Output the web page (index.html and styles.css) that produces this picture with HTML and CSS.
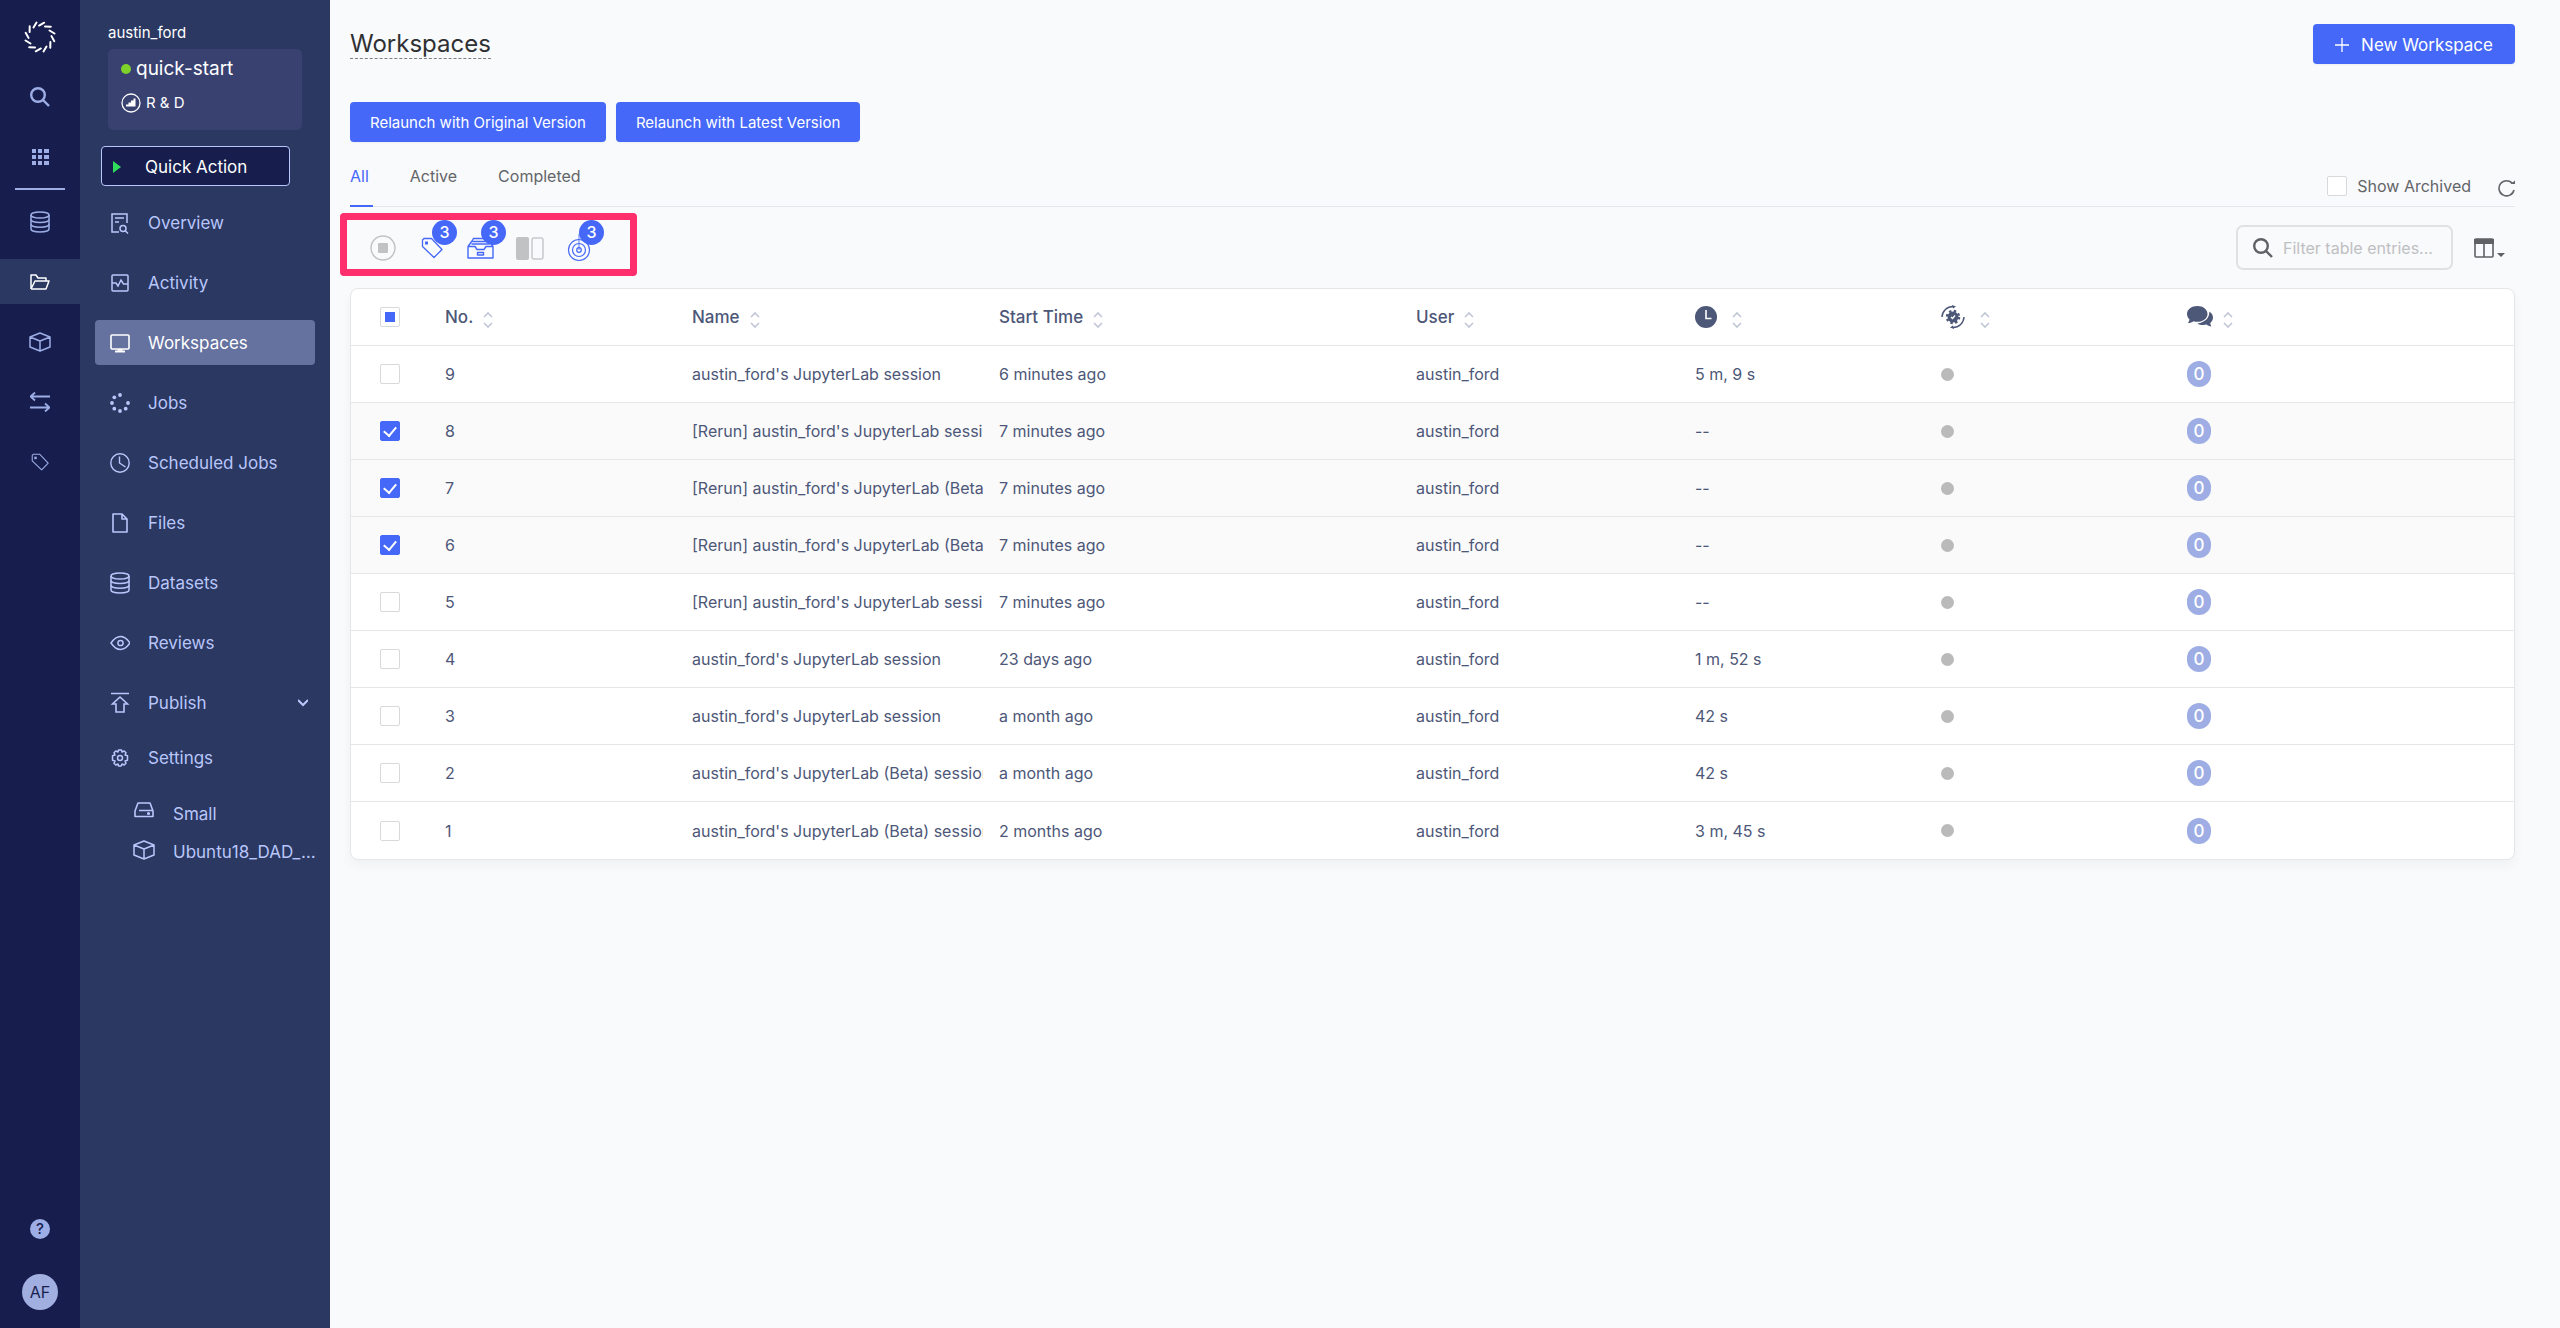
FILE: index.html
```html
<!DOCTYPE html>
<html lang="en">
<head>
<meta charset="utf-8">
<meta name="viewport" content="width=device-width, initial-scale=1">
<title>Workspaces - quick-start</title>
<link rel="stylesheet" href="styles.css">
</head>
<body>
<svg class="sprite" aria-hidden="true">
  <symbol id="i-database" viewBox="0 0 20 22"><g fill="none" stroke="currentColor" stroke-width="1.5"><ellipse cx="10" cy="4" rx="9" ry="3"/><path d="M1 4v14c0 1.700 4 3 9 3s9-1.300 9-3V4"/><path d="M1 8.500c0 1.700 4 3 9 3s9-1.300 9-3M1 13.200c0 1.700 4 3 9 3s9-1.300 9-3"/></g></symbol>
  <symbol id="i-cube" viewBox="0 0 22 20"><path d="M11 1 21 5v10l-10 4L1 15V5zM1 5l10 4 10-4M11 9v10" fill="none" stroke="currentColor" stroke-width="1.500" stroke-linejoin="round"/></symbol>
  <symbol id="i-search" viewBox="0 0 20 20"><g fill="none" stroke="currentColor" stroke-width="2.400"><circle cx="8" cy="8" r="6.800"/><path d="m13 13 6 6"/></g></symbol>
  <symbol id="i-sort" viewBox="0 0 10 16"><path d="m1 5 4-4 4 4M1 11l4 4 4-4" fill="none" stroke="#c0c5d6" stroke-width="1.600"/></symbol>
  <symbol id="i-tag" viewBox="0 0 22 22"><path d="M1.500 3v6.500L13 20.500l8-8L10.500 1.500H3z" fill="none" stroke="currentColor" stroke-width="1.300" stroke-linejoin="round"/><path d="M4 4.500h3v3H4z" fill="currentColor"/></symbol>
</svg>
<div class="app">
  <nav class="rail" aria-label="Main">
    <a class="rail-item logo" href="#" aria-label="Home"><svg width="34" height="34" viewBox="-17 -17 34 34"><g stroke="#fff" stroke-width="2" stroke-linecap="round"><path id="ray" d="M-3.500-14.500-6.500-9.500"/><use href="#ray" transform="rotate(30)"/><use href="#ray" transform="rotate(60)"/><use href="#ray" transform="rotate(90)"/><use href="#ray" transform="rotate(120)"/><use href="#ray" transform="rotate(150)"/><use href="#ray" transform="rotate(180)"/><use href="#ray" transform="rotate(210)"/><use href="#ray" transform="rotate(240)"/><use href="#ray" transform="rotate(270)"/><use href="#ray" transform="rotate(300)"/><use href="#ray" transform="rotate(330)"/></g></svg></a>
    <a class="rail-item" href="#" aria-label="Search"><svg width="20" height="20"><use href="#i-search"/></svg></a>
    <a class="rail-item" href="#" aria-label="Apps"><svg width="17" height="16" viewBox="0 0 17 16" fill="currentColor"><path d="M0 0h4v4H0zM6 0h4v4H6zM12 0h5v4h-5zM0 6h4v4H0zM6 6h4v4H6zM12 6h5v4h-5zM0 12h4v4H0zM6 12h4v4H6zM12 12h5v4h-5z"/></svg></a>
    <hr class="rail-line">
    <a class="rail-item" href="#" aria-label="Data"><svg width="20" height="22"><use href="#i-database"/></svg></a>
    <a class="rail-item current" href="#" aria-label="Projects"><svg width="20" height="16" viewBox="0 0 20 16" fill="none" stroke="currentColor" stroke-width="1.500" stroke-linejoin="round"><path d="M1 15V1h5l2 3h8v3M1 15h15l3-8H5L1 15"/></svg></a>
    <a class="rail-item" href="#" aria-label="Environments"><svg width="22" height="20"><use href="#i-cube"/></svg></a>
    <a class="rail-item" href="#" aria-label="Transfers"><svg width="20" height="20" viewBox="0 0 20 20" fill="none" stroke="currentColor" stroke-width="1.800"><path d="M5 .5.500 4.500 5 8.500M1 4.500h19M15 11.500l4.500 4-4.500 4M19 15.500H0"/></svg></a>
    <a class="rail-item" href="#" aria-label="Tags"><svg width="18" height="18"><use href="#i-tag"/></svg></a>
    <div class="rail-foot">
      <button class="help" type="button" aria-label="Help">?</button>
      <button class="avatar" type="button">AF</button>
    </div>
  </nav>

  <aside class="side">
    <header class="project">
      <a class="owner" href="#">austin_ford</a>
      <div class="card">
        <a class="project-name" href="#"><span class="live"></span>quick-start</a>
        <span class="stage"><svg width="20" height="20" viewBox="0 0 20 20"><circle cx="10" cy="10" r="9" fill="none" stroke="#fff" stroke-width="1.300"/><path d="M5 13.500v-2h2.500V9.500H10V7.500h2.500V5.500h2v8z" fill="#fff"/></svg>R &amp; D</span>
      </div>
    </header>
    <button class="quick" type="button"><svg width="8" height="12" viewBox="0 0 8 12"><path d="m0 0 8 6-8 6z" fill="#2fdc5b"/></svg>Quick Action</button>
    <nav class="menu" aria-label="Project">
      <a href="#"><svg width="20" height="22" viewBox="0 0 20 22" fill="none" stroke="currentColor" stroke-width="1.500"><path d="M9 20H2V2h15v9M5 6h9M5 10h4"/><circle cx="13" cy="16.500" r="3"/><path d="m15 18.500 3 3"/></svg>Overview</a>
      <a href="#"><svg width="20" height="20" viewBox="0 0 20 20" fill="none" stroke="currentColor" stroke-width="1.500"><rect x="2" y="2" width="16" height="16" rx="1"/><path d="M2 10h4l2 3 3-6 2.500 4H18"/></svg>Activity</a>
      <a class="current" href="#"><svg width="20" height="20" viewBox="0 0 20 20" fill="none" stroke="currentColor" stroke-width="1.600"><rect x="1" y="2" width="18" height="14" rx="1"/><path d="M5 18.500h10" stroke-width="2"/><path d="M7.500 17h5"/></svg>Workspaces</a>
      <a href="#"><svg width="20" height="20" viewBox="0 0 20 20" fill="currentColor"><circle cx="10" cy="2" r="1.900"/><circle cx="4.300" cy="4.300" r="1.900"/><circle cx="2" cy="10" r="1.900"/><circle cx="4.300" cy="15.700" r="1.900"/><circle cx="10" cy="18" r="1.900"/><circle cx="15.700" cy="15.700" r="1.900"/><circle cx="18" cy="10" r="1.900"/></svg>Jobs</a>
      <a href="#"><svg width="20" height="20" viewBox="0 0 20 20" fill="none" stroke="currentColor" stroke-width="1.400"><circle cx="10" cy="10" r="9.200"/><path d="M9.500 3.500V10l6 4"/></svg>Scheduled Jobs</a>
      <a href="#"><svg width="20" height="20" viewBox="0 0 20 20" fill="none" stroke="currentColor" stroke-width="1.600" stroke-linejoin="round"><path d="M12 1H3v18h14V6zM12 1v5h5"/></svg>Files</a>
      <a href="#"><svg width="20" height="22"><use href="#i-database"/></svg>Datasets</a>
      <a href="#"><svg width="20" height="20" viewBox="0 0 20 20" fill="none" stroke="currentColor" stroke-width="1.500"><path d="M1 10q4.500-6.500 9.500-6.500T20 10q-4.500 6.500-9.500 6.500T1 10z"/><circle cx="10.500" cy="10" r="2.600"/></svg>Reviews</a>
      <a href="#"><svg width="20" height="22" viewBox="0 0 20 22" fill="none" stroke="currentColor" stroke-width="1.600"><path d="M1 1.500h18M10 5 2.500 12H6v8h8v-8h3.500z"/></svg>Publish<svg class="chevron" width="10" height="8" viewBox="0 0 10 8" fill="none" stroke="currentColor" stroke-width="2"><path d="m0 1 5 5 5-5"/></svg></a>
      <a class="settings" href="#"><svg width="20" height="20" viewBox="0 0 20 20" fill="none" stroke="currentColor" stroke-width="1.500" stroke-linejoin="round"><circle cx="10" cy="10" r="2.500"/><path d="M8.500 2h3l.5 2 2.200-1 1.800 1.800-1 2.200 2.500.8v4.400l-2.500.8 1 2.200-1.800 1.800-2.200-1-.8 2H8.500L8 16l-2.200 1L4 15.200 5 13l-2.500-.8V7.800L5 7 4 4.800 5.800 3 8 4z"/></svg>Settings</a>
      <div class="submenu">
        <a href="#"><svg width="22" height="16" viewBox="0 0 22 16" fill="none" stroke="currentColor" stroke-width="1.600" stroke-linejoin="round"><path d="M2 9 5 1h12l3 8v5.500H2zM6 8.500h13"/><circle cx="15.500" cy="11.500" r=".8"/></svg>Small</a>
        <a href="#"><svg width="22" height="20"><use href="#i-cube"/></svg><span>Ubuntu18_DAD_Py3</span></a>
      </div>
    </nav>
  </aside>

  <main class="main">
    <header class="head">
      <h1>Workspaces</h1>
      <button class="btn btn-new" type="button"><svg width="14" height="16" viewBox="0 0 14 16" stroke="#fff" stroke-width="1.300"><path d="M7 1v14M0 8h14"/></svg>New Workspace</button>
    </header>
    <div class="relaunch">
      <button class="btn" type="button">Relaunch with Original Version</button>
      <button class="btn" type="button">Relaunch with Latest Version</button>
    </div>
    <div class="tabs">
      <a class="current" href="#">All</a>
      <a href="#">Active</a>
      <a href="#">Completed</a>
      <label class="archived"><input class="check" type="checkbox">Show Archived</label>
      <button class="icon-btn refresh" type="button" aria-label="Refresh"><svg width="17" height="18" viewBox="0 0 17 18" fill="none" stroke="#636568" stroke-width="1.600"><path d="M14.500 4.500A7.600 7.600 0 1 0 16 11"/><path d="M12.500 5H17V1.500z" fill="#636568" stroke="none"/></svg></button>
    </div>

    <div class="toolbar">
      <div class="actions">
        <button class="tool" type="button" aria-label="Stop"><svg width="26" height="26" viewBox="0 0 26 26"><circle cx="13" cy="13" r="12" fill="none" stroke="#c1c2c4" stroke-width="1.500"/><rect x="8" y="8" width="10" height="10" rx="1" fill="#c1c2c4"/></svg></button>
        <button class="tool" type="button" aria-label="Tag"><svg width="22" height="22"><use href="#i-tag"/></svg><span class="count">3</span></button>
        <button class="tool" type="button" aria-label="Archive"><svg width="27" height="22" viewBox="0 0 27 22" fill="none" stroke="currentColor" stroke-width="1.400" stroke-linejoin="round"><path d="M1 9.500h7l2 3h7l2-3h7V21H1zM1 9.500 5 4l1.500-2.500h14L22 4l4 5.500M5.500 4.500h16M4.500 7h18"/><path d="M10.500 15.500h6v2.500h-6z"/></svg><span class="count">3</span></button>
        <button class="tool" type="button" aria-label="Compare"><svg width="28" height="23" viewBox="0 0 28 23"><rect width="13" height="23" rx="2" fill="#c1c2c4"/><rect x="16" y="1" width="11" height="21" rx="2" fill="none" stroke="#c8c9cb" stroke-width="1.500"/></svg></button>
        <button class="tool" type="button" aria-label="Set goal"><svg width="24" height="28" viewBox="0 0 24 28" fill="none" stroke="currentColor" stroke-width="1.200"><circle cx="12" cy="16" r="10.500"/><circle cx="12" cy="16" r="6.500"/><circle cx="12" cy="16" r="2.300"/><path d="M12 0v16" stroke-opacity=".7"/></svg><span class="count">3</span></button>
      </div>
      <div class="filters">
        <label class="filter"><svg width="20" height="20"><use href="#i-search"/></svg><input type="text" placeholder="Filter table entries..." aria-label="Filter table entries"></label>
        <button class="icon-btn" type="button" aria-label="Columns"><svg width="31" height="20" viewBox="0 0 31 20"><rect x="1" y="1" width="18" height="18" rx="1" fill="none" stroke="#5f6164" stroke-width="1.600"/><path d="M0 1h20v5H0zM9.200 6h1.600v13H9.200zM23 15h8l-4 4z" fill="#5f6164"/></svg></button>
      </div>
    </div>

    <div class="panel">
      <table>
        <colgroup><col class="c-check"><col class="c-no"><col class="c-name"><col class="c-start"><col class="c-user"><col class="c-time"><col class="c-status"><col></colgroup>
        <thead>
          <tr>
            <th><input class="check partial" type="checkbox" aria-label="Select all" aria-checked="mixed"></th>
            <th><span class="sort">No.<svg width="10" height="16"><use href="#i-sort"/></svg></span></th>
            <th><span class="sort">Name<svg width="10" height="16"><use href="#i-sort"/></svg></span></th>
            <th><span class="sort">Start Time<svg width="10" height="16"><use href="#i-sort"/></svg></span></th>
            <th><span class="sort">User<svg width="10" height="16"><use href="#i-sort"/></svg></span></th>
            <th aria-label="Duration"><span class="sort pic"><svg width="22" height="22" viewBox="0 0 22 22"><circle cx="11" cy="11" r="11" fill="#4d5778"/><path d="M11 4v8.500h5.500" fill="none" stroke="#fff" stroke-width="1.600"/></svg><svg width="10" height="16"><use href="#i-sort"/></svg></span></th>
            <th aria-label="Status"><span class="sort pic"><svg width="24" height="24" viewBox="0 0 24 24"><path d="M1 12A11 11 0 0 1 12 1.500M23 12a11 11 0 0 1-11 10.500" fill="none" stroke="#4d5778" stroke-width="1.500"/><path d="m11 0 4 1.500-3 2zM13 24l-4-1.500 3-2z" fill="#4d5778"/><circle cx="12" cy="12" r="5.500" fill="#4d5778"/><circle cx="12" cy="12" r="6" fill="none" stroke="#4d5778" stroke-width="2.500" stroke-dasharray="2.360"/><path d="m10 12 1.500 1.500 2.500-3" fill="none" stroke="#fff" stroke-width="1.300"/></svg><svg width="10" height="16"><use href="#i-sort"/></svg></span></th>
            <th aria-label="Comments"><span class="sort"><svg width="26" height="22" viewBox="0 0 26 22" fill="#4d5778"><path d="M10.500 0C4.500 0 0 3.500 0 8c0 2 1 4 2.500 5.500C2.300 15 1.500 16 1 17c2 0 4.200-.8 5.500-1.800 1.200.4 2.600.6 4 .6C16 15.800 20.500 12.500 20.500 8S16 0 10.500 0z"/><path d="M22.300 5.500c.3 6-4 11-12 12 1.600 1 3.700 1.500 6 1.500 1.100 0 2.200-.2 3.200-.5 1.300 1 3 1.800 4.800 2-.3-1-.9-2-1.100-3.300C25 15.500 26 13.500 26 11.500c0-2.400-1.500-4.600-3.700-6z"/></svg><svg width="10" height="16"><use href="#i-sort"/></svg></span></th>
          </tr>
        </thead>
        <tbody>
          <tr><td><input class="check" type="checkbox" aria-label="Select 9"></td><td>9</td><td><div class="clip">austin_ford's JupyterLab session</div></td><td>6 minutes ago</td><td>austin_ford</td><td>5 m, 9 s</td><td><span class="dot"></span></td><td><span class="notes">0</span></td></tr>
          <tr class="picked"><td><input class="check" type="checkbox" checked aria-label="Select 8"></td><td>8</td><td><div class="clip">[Rerun] austin_ford's JupyterLab session</div></td><td>7 minutes ago</td><td>austin_ford</td><td>--</td><td><span class="dot"></span></td><td><span class="notes">0</span></td></tr>
          <tr class="picked"><td><input class="check" type="checkbox" checked aria-label="Select 7"></td><td>7</td><td><div class="clip">[Rerun] austin_ford's JupyterLab (Beta) session</div></td><td>7 minutes ago</td><td>austin_ford</td><td>--</td><td><span class="dot"></span></td><td><span class="notes">0</span></td></tr>
          <tr class="picked"><td><input class="check" type="checkbox" checked aria-label="Select 6"></td><td>6</td><td><div class="clip">[Rerun] austin_ford's JupyterLab (Beta) session</div></td><td>7 minutes ago</td><td>austin_ford</td><td>--</td><td><span class="dot"></span></td><td><span class="notes">0</span></td></tr>
          <tr><td><input class="check" type="checkbox" aria-label="Select 5"></td><td>5</td><td><div class="clip">[Rerun] austin_ford's JupyterLab session</div></td><td>7 minutes ago</td><td>austin_ford</td><td>--</td><td><span class="dot"></span></td><td><span class="notes">0</span></td></tr>
          <tr><td><input class="check" type="checkbox" aria-label="Select 4"></td><td>4</td><td><div class="clip">austin_ford's JupyterLab session</div></td><td>23 days ago</td><td>austin_ford</td><td>1 m, 52 s</td><td><span class="dot"></span></td><td><span class="notes">0</span></td></tr>
          <tr><td><input class="check" type="checkbox" aria-label="Select 3"></td><td>3</td><td><div class="clip">austin_ford's JupyterLab session</div></td><td>a month ago</td><td>austin_ford</td><td>42 s</td><td><span class="dot"></span></td><td><span class="notes">0</span></td></tr>
          <tr><td><input class="check" type="checkbox" aria-label="Select 2"></td><td>2</td><td><div class="clip">austin_ford's JupyterLab (Beta) session</div></td><td>a month ago</td><td>austin_ford</td><td>42 s</td><td><span class="dot"></span></td><td><span class="notes">0</span></td></tr>
          <tr><td><input class="check" type="checkbox" aria-label="Select 1"></td><td>1</td><td><div class="clip">austin_ford's JupyterLab (Beta) session</div></td><td>2 months ago</td><td>austin_ford</td><td>3 m, 45 s</td><td><span class="dot"></span></td><td><span class="notes">0</span></td></tr>
        </tbody>
      </table>
    </div>
  </main>
</div>
</body>
</html>
```
FILE: styles.css
```css
* { box-sizing: border-box; }
body { margin: 0; background: #f9fafc; color: #4d5778; font: 400 16px/20px Inter, "Open Sans", sans-serif; }
a { color: inherit; text-decoration: none; }
button { border: 0; padding: 0; background: none; color: inherit; font: inherit; cursor: pointer; }
svg { flex: none; display: block; }
.sprite { width: 0; height: 0; position: absolute; }
.app { display: flex; min-height: 100vh; }

/* icon rail */
.rail { width: 80px; flex: none; display: flex; flex-direction: column; gap: 15px; padding-top: 14px; background: #171e4d; color: #9dade6; }
.rail-item { height: 45px; display: flex; align-items: center; justify-content: center; }
.rail-item.current { background: #2a3862; color: #fff; }
.rail-line { width: 50px; height: 2px; margin: -6px auto; border: 0; background: #9dade6; }
.rail-foot { margin-top: auto; display: flex; flex-direction: column; align-items: center; gap: 35px; padding-bottom: 18px; }
.help { width: 20px; height: 20px; border-radius: 50%; background: #9dade6; color: #171e4d; font-size: 15px; font-weight: 500; line-height: 20px; }
.avatar { width: 36px; height: 36px; border-radius: 50%; background: #a0aee0; color: #171e4d; line-height: 36px; }

/* project sidebar */
.side { width: 250px; flex: none; padding: 24px 15px 0; background: #2a3862; color: #b9c6fb; }
.project { padding: 0 13px; color: #fff; }
.owner { display: block; margin-bottom: 8px; font-size: 15px; line-height: 17px; }
.card { width: 194px; height: 81px; padding: 8px 13px; border-radius: 5px; background: #394171; }
.project-name { display: flex; align-items: center; gap: 5px; font-size: 19px; line-height: 24px; }
.live { width: 10px; height: 10px; border-radius: 50%; background: #7ed32b; }
.stage { display: flex; align-items: center; gap: 5px; margin-top: 12px; font-size: 15px; }
.quick { display: flex; align-items: center; gap: 24px; width: 189px; height: 40px; margin: 16px 0 14px 6px; padding: 2px 11px 0; border: 1px solid #b9c6fb; border-radius: 4px; background: #171e4d; color: #fff; font-size: 17px; }
.menu { display: flex; flex-direction: column; gap: 15px; font-size: 17px; }
.menu > a { display: flex; align-items: center; gap: 18px; height: 45px; padding: 0 15px; border-radius: 4px; }
.menu > a.current { background: #65719f; color: #fff; }
.menu > a.settings { margin-top: -5px; }
.chevron { margin-left: auto; margin-right: -8px; }
.submenu { display: flex; flex-direction: column; gap: 14px; margin-top: 7px; padding-left: 38px; }
.submenu a { display: flex; gap: 18px; line-height: 24px; }
.submenu span { min-width: 0; margin-right: -3px; overflow: hidden; text-overflow: ellipsis; white-space: nowrap; }

/* content */
.main { flex: 1; min-width: 0; padding: 24px 45px 40px 20px; }
.head { display: flex; justify-content: space-between; align-items: flex-start; }
h1 { margin: 6px 0 0; border-bottom: 1px dashed #7d7f82; color: #2f3033; font-size: 24px; font-weight: 400; line-height: 28px; }
.btn { height: 40px; padding: 1px 20px 0; border-radius: 4px; background: #4568f8; color: #fff; font-size: 15px; box-shadow: 0 1px 2px #0000000d; }
.btn-new { display: flex; align-items: center; gap: 12px; padding: 1px 22px 0; font-size: 17px; }
.relaunch { display: flex; gap: 10px; margin-top: 38px; }
.tabs { display: flex; gap: 37px; height: 65px; border-bottom: 1px solid #e4e6e9; color: #636568; }
.tabs > a { height: 65px; padding: 24px 4px 0 0; }
.tabs > a.current { border-bottom: 2px solid #4568f8; color: #4568f8; }
.archived { display: flex; align-items: center; gap: 10px; margin: 24px -10px 0 auto; }
.refresh { margin-top: 28px; }
.toolbar { display: flex; justify-content: space-between; align-items: flex-start; margin: 6px 0 12px; }
.actions { display: flex; gap: 10px; height: 63px; margin-left: -10px; padding: 8px 32px 0 16px; border: 7px solid #ff2f6e; border-radius: 4px; }
.tool { position: relative; display: flex; align-items: center; justify-content: center; width: 39px; height: 40px; color: #4568f8; }
.count { position: absolute; left: 20px; top: -8px; width: 25px; height: 25px; border-radius: 50%; background: #4568f8; color: #fff; font-weight: 500; line-height: 25px; text-align: center; }
.filters { display: flex; align-items: center; gap: 21px; margin: 12px 10px 0 0; }
.filter { display: flex; align-items: center; gap: 10px; width: 217px; height: 45px; padding: 0 12px 0 15px; border: 2px solid #e0e1e2; border-radius: 7px; color: #5f6164; }
.filter input { flex: 1; min-width: 0; padding: 0; border: 0; outline: 0; background: none; color: #5f6164; font: 400 16px/20px Inter, "Open Sans", sans-serif; }
.filter input::placeholder { color: #bfc0c2; opacity: 1; }

/* tick boxes */
.check { appearance: none; display: grid; place-items: center; width: 20px; height: 20px; margin: 0; border: 1px solid #d8d9db; border-radius: 2px; background: #fff; }
.check:checked { border-color: #4568f8; background: #4568f8; }
.check:checked::before { content: ""; width: 6px; height: 10px; margin-top: -3px; border: solid #fff; border-width: 0 2px 2px 0; rotate: 40deg; }
.partial::before { content: ""; width: 10px; height: 10px; background: #4568f8; }

/* table */
.panel { overflow: hidden; border: 1px solid #e4e6e8; border-radius: 8px; background: #fff; box-shadow: 0 6px 12px #0000000a; }
table { width: 100%; table-layout: fixed; border-collapse: separate; border-spacing: 0; }
.c-check { width: 86px; }
.c-no { width: 247px; }
.c-name { width: 307px; }
.c-start { width: 417px; }
.c-user { width: 279px; }
.c-time, .c-status { width: 246px; }
th, td { height: 57px; padding: 0 8px; border-bottom: 1px solid #e5e6e8; text-align: left; vertical-align: middle; white-space: nowrap; }
tbody tr:last-child td { border-bottom: 0; }
th:first-child, td:first-child { padding-left: 29px; }
th { font-size: 17px; font-weight: 500; }
.sort { display: flex; align-items: center; gap: 10px; }
.sort svg:last-child { margin-top: 6px; }
.pic { gap: 15px; }
.picked { background: #fafafa; }
.clip { overflow: hidden; }
.dot { display: block; width: 13px; height: 13px; border-radius: 50%; background: #bababa; }
.notes { display: block; width: 24px; height: 26px; border-radius: 12px; background: #9eaee5; color: #fff; font-size: 17px; font-weight: 500; line-height: 26px; text-align: center; }
```
